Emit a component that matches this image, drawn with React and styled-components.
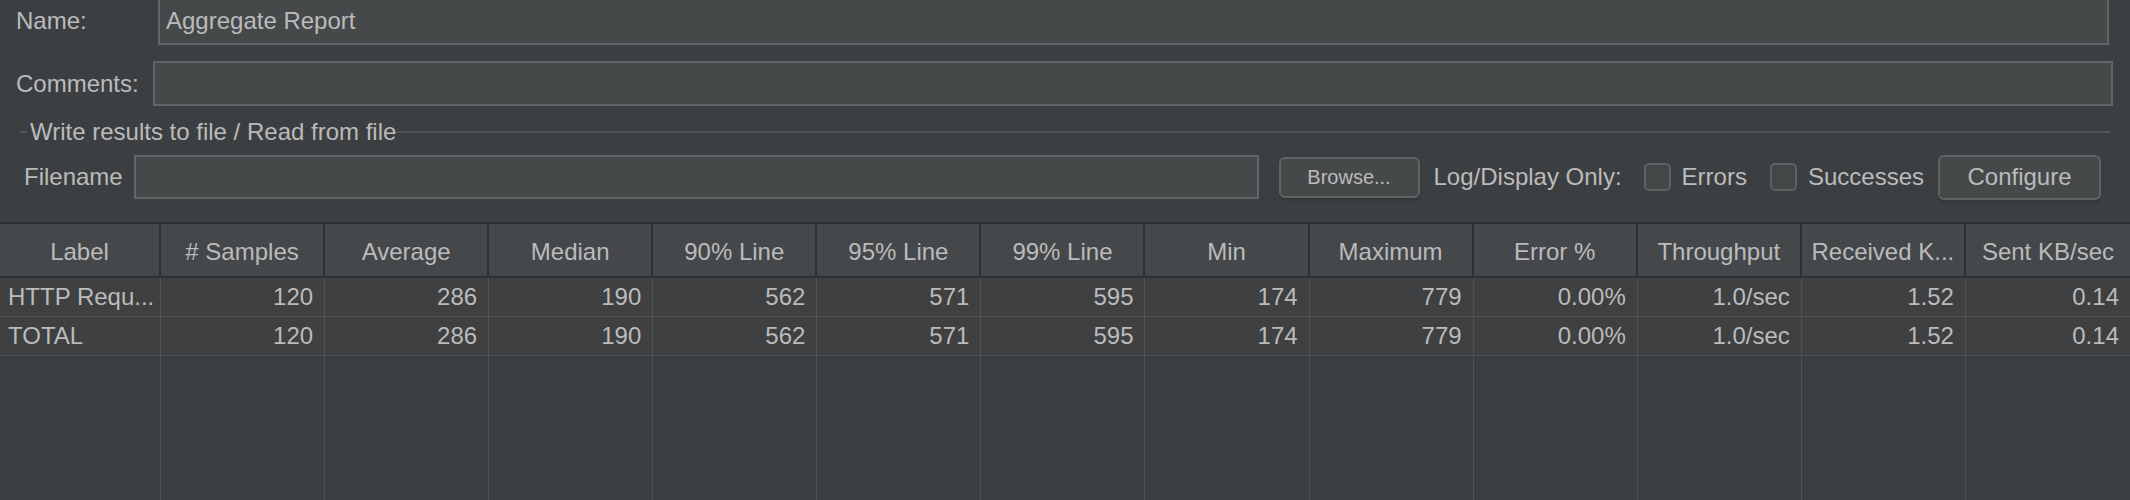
import React from "react";
import styled, { createGlobalStyle } from "styled-components";

const GlobalStyle = createGlobalStyle`
  html, body {
    margin: 0;
    padding: 0;
    background: #3c3f41;
  }
  body {
    width: 2130px;
    height: 500px;
    overflow: hidden;
    font-family: "Liberation Sans", Arial, sans-serif;
    color: #bbbbbb;
  }
`;

const Page = styled.div`
  width: 2130px;
  height: 500px;
  display: flex;
  flex-direction: column;
  background: #3c3f41;
`;

const Form = styled.div`
  height: 226px;
  margin-top: -4px;
  display: flex;
  flex-direction: column;
`;

const Row = styled.div`
  display: flex;
  align-items: center;
  height: ${(p) => p.h}px;
  margin-top: ${(p) => p.mt || 0}px;
  padding-left: ${(p) => p.pl || 0}px;
  padding-right: ${(p) => p.pr || 0}px;
`;

const Label = styled.span`
  font-size: 24px;
  line-height: 1;
  width: ${(p) => (p.w ? `${p.w}px` : "auto")};
  margin-left: ${(p) => p.ml || 0}px;
  flex: none;
  white-space: nowrap;
`;

const Field = styled.div`
  flex: 1;
  height: 100%;
  box-sizing: border-box;
  background: #45494a;
  border: 2px solid #626566;
  display: flex;
  align-items: center;
  padding-left: 6px;
  font-size: 24px;
  color: #bbbbbb;
`;

const Titled = styled.div`
  display: flex;
  align-items: center;
  height: 30px;
  margin-top: 11px;
  padding-left: 20px;
  padding-right: 20px;
`;

const Dash = styled.span`
  width: 7px;
  height: 2px;
  background: #525557;
  margin-right: 3px;
`;

const Rule = styled.span`
  flex: 1;
  height: 2px;
  background: #525557;
`;

const Button = styled.div`
  flex: none;
  box-sizing: border-box;
  width: ${(p) => p.w}px;
  height: ${(p) => p.h}px;
  margin-left: ${(p) => p.ml}px;
  background: #45494a;
  border: 2px solid #5f6364;
  border-radius: 6px;
  box-shadow: 0 3px 1px #363839;
  display: flex;
  align-items: center;
  justify-content: center;
  font-size: ${(p) => p.fs}px;
  color: #bbbbbb;
`;

const Check = styled.span`
  flex: none;
  box-sizing: border-box;
  width: 27px;
  height: 28px;
  margin-left: ${(p) => p.ml}px;
  margin-right: 11px;
  background: #424847;
  border: 2px solid #5d6162;
  border-radius: 5px;
`;

const Spacer = styled.span`
  flex: none;
  width: ${(p) => p.w}px;
`;

const Grid = styled.div`
  flex: 1;
  display: grid;
  grid-template-columns: 161px repeat(12, 1fr);
  grid-template-rows: 54px 39px 39px 1fr;
  border-top: 2px solid #2e3032;
`;

const Head = styled.div`
  background: #45484a;
  border-right: ${(p) => (p.last ? "none" : "2px solid #2e3032")};
  border-bottom: 2px solid #2e3032;
  display: flex;
  align-items: center;
  justify-content: center;
  padding-top: 3px;
  font-size: 24px;
  white-space: nowrap;
  overflow: hidden;
`;

const Cell = styled.div`
  background: ${(p) => (p.fill ? "#3c3f41" : "#3e4042")};
  border-right: ${(p) => (p.last ? "none" : "1px solid #4f5254")};
  border-bottom: ${(p) => (p.fill ? "none" : "1px solid #4f5254")};
  display: flex;
  align-items: center;
  justify-content: ${(p) => (p.left ? "flex-start" : "flex-end")};
  padding: 0 ${(p) => (p.left ? 8 : 11)}px 0 ${(p) => (p.left ? 8 : 0)}px;
  font-size: 24px;
  white-space: nowrap;
  overflow: hidden;
`;

const headers = [
  "Label",
  "# Samples",
  "Average",
  "Median",
  "90% Line",
  "95% Line",
  "99% Line",
  "Min",
  "Maximum",
  "Error %",
  "Throughput",
  "Received K...",
  "Sent KB/sec",
];

const rows = [
  ["HTTP Requ...", "120", "286", "190", "562", "571", "595", "174", "779", "0.00%", "1.0/sec", "1.52", "0.14"],
  ["TOTAL", "120", "286", "190", "562", "571", "595", "174", "779", "0.00%", "1.0/sec", "1.52", "0.14"],
];

export default function App() {
  return (
    <Page>
      <GlobalStyle />
      <Form>
        <Row h={49} pl={16} pr={21}>
          <Label w={142}>Name:</Label>
          <Field>Aggregate Report</Field>
        </Row>
        <Row h={45} mt={16} pl={16} pr={17}>
          <Label w={137}>Comments:</Label>
          <Field />
        </Row>
        <Titled>
          <Dash />
          <Label>Write results to file / Read from file</Label>
          <Rule />
        </Titled>
        <Row h={44} mt={8} pl={24}>
          <Label w={110}>Filename</Label>
          <Field />
          <Button w={141} h={41} ml={20} fs={20}>
            Browse...
          </Button>
          <Label ml={14}>Log/Display Only:</Label>
          <Check ml={22} />
          <Label>Errors</Label>
          <Check ml={23} />
          <Label>Successes</Label>
          <Button w={163} h={45} ml={14} fs={24}>
            Configure
          </Button>
          <Spacer w={29} />
        </Row>
      </Form>
      <Grid>
        {headers.map((h, i) => (
          <Head key={h} last={i === headers.length - 1}>
            {h}
          </Head>
        ))}
        {rows.map((r, ri) =>
          r.map((v, i) => (
            <Cell key={`${ri}-${i}`} left={i === 0} last={i === r.length - 1}>
              {v}
            </Cell>
          ))
        )}
        {headers.map((h, i) => (
          <Cell key={`f-${h}`} fill last={i === headers.length - 1} />
        ))}
      </Grid>
    </Page>
  );
}
